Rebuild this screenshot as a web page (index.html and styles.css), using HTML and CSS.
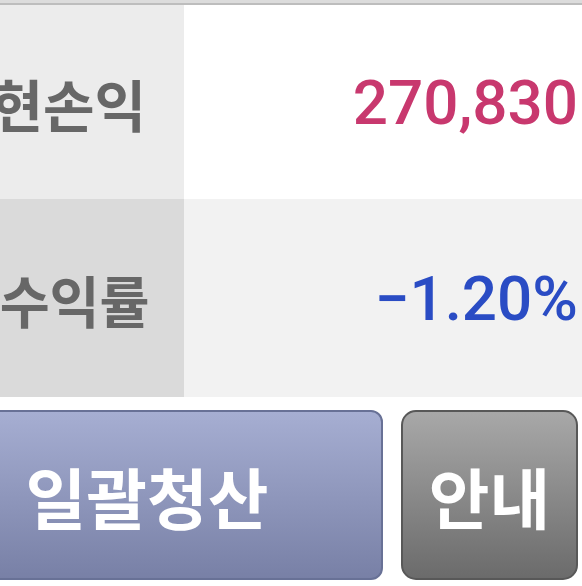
FILE: index.html
```html
<!DOCTYPE html>
<html lang="ko">
<head>
<meta charset="utf-8">
<link rel="stylesheet" href="styles.css">
</head>
<body>
<div class="topline"></div>
<div class="row row-a">
  <div class="label"><span>실현손익</span></div>
  <div class="value"><span class="pos">270,830</span></div>
</div>
<div class="row row-b">
  <div class="label"><span class="narrow">수익률</span></div>
  <div class="value"><span class="neg">−1.20%</span></div>
</div>
<div class="buttons">
  <div class="btn btn-main">일괄청산</div>
  <div class="btn btn-info">안내</div>
</div>
</body>
</html>
```
FILE: styles.css
```css
html, body {
  margin: 0;
  padding: 0;
  background: #ffffff;
}
body {
  width: 582px;
  height: 586px;
  overflow: hidden;
  font-family: "Noto Sans CJK KR", "Noto Sans", sans-serif;
}
.topline {
  height: 3px;
  background: #dcdcdc;
  border-bottom: 2px solid #bdbdbd;
}
.row {
  display: grid;
  grid-template-columns: 184px 1fr;
}
.row-a { height: 194px; }
.row-b { height: 198px; }
.row-a .label { background: #ececec; }
.row-a .value { background: #ffffff; }
.row-b .label { background: #dadada; padding-right: 34px; }
.row-b .value { background: #f2f2f2; }
.label {
  display: flex;
  justify-content: flex-end;
  align-items: center;
  overflow: hidden;
  padding-right: 38px;
  white-space: nowrap;
  font-size: 56px;
  font-weight: 700;
  color: #676767;
}
.narrow {
  display: inline-block;
  transform: scaleX(0.97);
  transform-origin: right center;
}
.value {
  display: flex;
  justify-content: flex-end;
  align-items: center;
  overflow: hidden;
  white-space: nowrap;
  padding-right: 4px;
  font-family: Roboto, "Liberation Sans", sans-serif;
  font-size: 62px;
  font-weight: 500;
}
.pos { color: #c8386e; }
.neg { color: #2a4cc4; }
.buttons {
  display: flex;
  gap: 18px;
  padding-top: 13px;
}
.btn {
  box-sizing: border-box;
  height: 170px;
  display: flex;
  align-items: center;
  justify-content: center;
  color: #ffffff;
  font-size: 66px;
  font-weight: 700;
  flex: none;
}
.btn-main {
  width: 472px;
  margin-left: -89px;
  border: 2px solid #687196;
  border-radius: 12px;
  background: linear-gradient(#a6aed2, #7880a6);
}
.btn-info {
  width: 177px;
  border: 2px solid #585858;
  border-radius: 15px;
  background: linear-gradient(#a8a8a8, #6b6b6b);
}
```
